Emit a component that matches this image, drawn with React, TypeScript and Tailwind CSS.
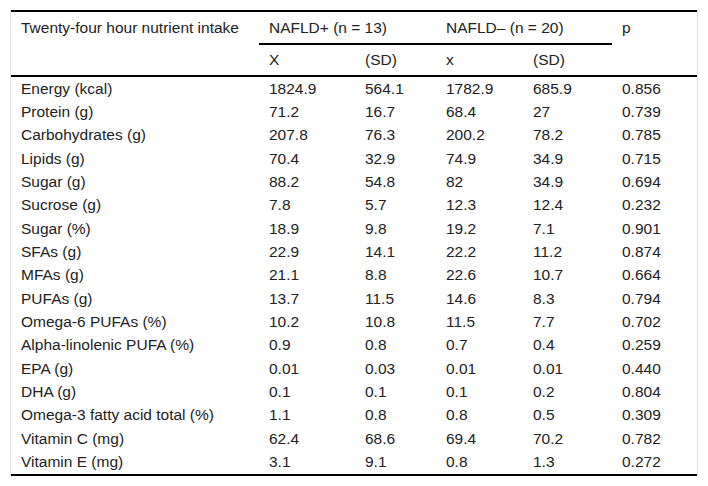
import React from 'react';

type Row = [string, string, string, string, string, string];

const rows: Row[] = [
  ['Energy (kcal)', '1824.9', '564.1', '1782.9', '685.9', '0.856'],
  ['Protein (g)', '71.2', '16.7', '68.4', '27', '0.739'],
  ['Carbohydrates (g)', '207.8', '76.3', '200.2', '78.2', '0.785'],
  ['Lipids (g)', '70.4', '32.9', '74.9', '34.9', '0.715'],
  ['Sugar (g)', '88.2', '54.8', '82', '34.9', '0.694'],
  ['Sucrose (g)', '7.8', '5.7', '12.3', '12.4', '0.232'],
  ['Sugar (%)', '18.9', '9.8', '19.2', '7.1', '0.901'],
  ['SFAs (g)', '22.9', '14.1', '22.2', '11.2', '0.874'],
  ['MFAs (g)', '21.1', '8.8', '22.6', '10.7', '0.664'],
  ['PUFAs (g)', '13.7', '11.5', '14.6', '8.3', '0.794'],
  ['Omega-6 PUFAs (%)', '10.2', '10.8', '11.5', '7.7', '0.702'],
  ['Alpha-linolenic PUFA (%)', '0.9', '0.8', '0.7', '0.4', '0.259'],
  ['EPA (g)', '0.01', '0.03', '0.01', '0.01', '0.440'],
  ['DHA (g)', '0.1', '0.1', '0.1', '0.2', '0.804'],
  ['Omega-3 fatty acid total (%)', '1.1', '0.8', '0.8', '0.5', '0.309'],
  ['Vitamin C (mg)', '62.4', '68.6', '69.4', '70.2', '0.782'],
  ['Vitamin E (mg)', '3.1', '9.1', '0.8', '1.3', '0.272'],
];

const cols = 'grid grid-cols-[248px_96px_81px_87px_89px_85px]';

export default function App() {
  return (
    <div className="min-h-[486px] w-[708px] bg-white pt-[10px] pl-[10px] font-['Liberation_Sans',Arial,sans-serif] text-[15.5px] text-[#222]">
      <div className="w-[688px] border-x border-[#e3e3e3]">
        {/* header */}
        <div className={`${cols} border-t-2 border-black border-b-2`}>
          <div className="row-span-2 pl-[10px]">
            <div className="flex h-[31px] items-center whitespace-nowrap">Twenty-four hour nutrient intake</div>
          </div>
          <div className="col-span-2 flex h-[33px] items-center border-b-2 border-black pl-[10px] whitespace-nowrap">
            NAFLD+ (n = 13)
          </div>
          <div className="col-span-2 flex h-[33px] items-center border-b-2 border-black pl-[10px] whitespace-nowrap">
            NAFLD– (n = 20)
          </div>
          <div className="row-span-2 pl-[10px]">
            <div className="flex h-[31px] items-center">p</div>
          </div>
          <div className="flex h-[30px] items-center pl-[10px]">X</div>
          <div className="flex h-[30px] items-center pl-[10px]">(SD)</div>
          <div className="flex h-[30px] items-center pl-[10px]">x</div>
          <div className="flex h-[30px] items-center pl-[10px]">(SD)</div>
        </div>

        {/* body */}
        <div className="border-b-2 border-black">
          {rows.map((r) => (
            <div key={r[0]} className={`${cols} h-[23.35px] items-center`}>
              {r.map((c, i) => (
                <div key={i} className="pl-[10px] leading-[18px] whitespace-nowrap">
                  {c}
                </div>
              ))}
            </div>
          ))}
        </div>
      </div>
    </div>
  );
}
